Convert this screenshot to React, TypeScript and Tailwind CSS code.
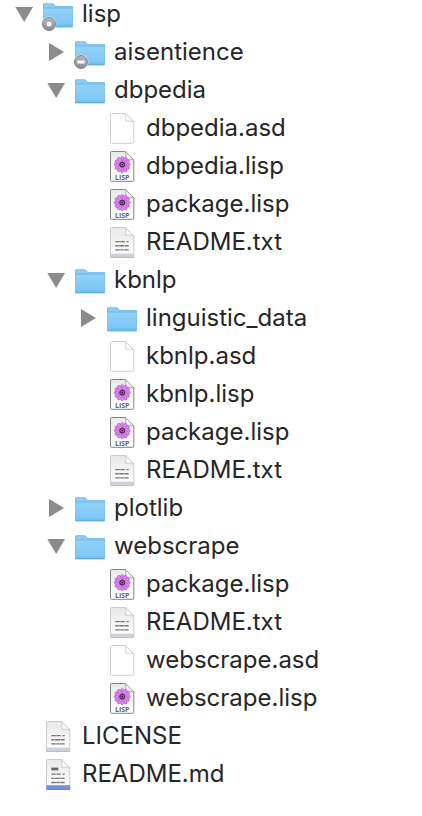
import { useState } from "react";

type Kind = "folder" | "blank" | "lisp" | "txt" | "md";
type Badge = "dot" | "minus";
type Entry = {
  name: string;
  kind: Kind;
  badge?: Badge;
  open?: boolean;
  children?: Entry[];
};

const TREE: Entry[] = [
  {
    name: "lisp",
    kind: "folder",
    badge: "dot",
    open: true,
    children: [
      { name: "aisentience", kind: "folder", badge: "minus" },
      {
        name: "dbpedia",
        kind: "folder",
        open: true,
        children: [
          { name: "dbpedia.asd", kind: "blank" },
          { name: "dbpedia.lisp", kind: "lisp" },
          { name: "package.lisp", kind: "lisp" },
          { name: "README.txt", kind: "txt" },
        ],
      },
      {
        name: "kbnlp",
        kind: "folder",
        open: true,
        children: [
          { name: "linguistic_data", kind: "folder" },
          { name: "kbnlp.asd", kind: "blank" },
          { name: "kbnlp.lisp", kind: "lisp" },
          { name: "package.lisp", kind: "lisp" },
          { name: "README.txt", kind: "txt" },
        ],
      },
      { name: "plotlib", kind: "folder" },
      {
        name: "webscrape",
        kind: "folder",
        open: true,
        children: [
          { name: "package.lisp", kind: "lisp" },
          { name: "README.txt", kind: "txt" },
          { name: "webscrape.asd", kind: "blank" },
          { name: "webscrape.lisp", kind: "lisp" },
        ],
      },
    ],
  },
  { name: "LICENSE", kind: "txt" },
  { name: "README.md", kind: "md" },
];

const PETALS = Array.from({ length: 12 }, (_, i) => i * 30);

function Gradients() {
  return (
    <svg className="absolute h-0 w-0" aria-hidden="true">
      <defs>
        <linearGradient id="folderFront" x1="0" y1="0" x2="0" y2="1">
          <stop offset="0" stopColor="#92d2f8" />
          <stop offset="1" stopColor="#7ac6f5" />
        </linearGradient>
        <linearGradient id="paper" x1="0" y1="0" x2="0" y2="1">
          <stop offset="0" stopColor="#e8e8e8" />
          <stop offset="1" stopColor="#ffffff" />
        </linearGradient>
        <linearGradient id="badge" x1="0" y1="0" x2="0" y2="1">
          <stop offset="0" stopColor="#b8b8b8" />
          <stop offset="1" stopColor="#8c8c8c" />
        </linearGradient>
      </defs>
    </svg>
  );
}

function FolderIcon({ badge }: { badge?: Badge }) {
  return (
    <svg viewBox="0 0 32 32" className="h-8 w-8 shrink-0 overflow-visible" aria-hidden="true">
      <path d="M1.5 29.6h29" stroke="#000" strokeOpacity=".14" />
      <path
        d="M1 6.6Q1 5.3 2.2 5.3H10.2Q11 5.3 11.7 5.9L13.4 7.4Q14 8 15 8H29.8Q31 8 31 9.2V28Q31 29 30 29H2Q1 29 1 28Z"
        fill="#6fbbea"
      />
      <path d="M1.8 9V6.8Q1.8 6 2.6 6H10Q10.8 6 11.3 6.5L13 8Q13.7 8.6 14.6 8.6H30.2V10H1.8Z" fill="#8ccbf3" />
      <path d="M1.4 10.2H30.6V27.6Q30.6 28.5 29.8 28.5H2.2Q1.4 28.5 1.4 27.6Z" fill="url(#folderFront)" />
      <path d="M1.4 9.9H30.6" stroke="#70b7e3" strokeWidth=".8" />
      <path d="M2 27H30" stroke="#68b4e4" strokeWidth=".7" />
      <path d="M1.4 28.6H30.6" stroke="#5da5d3" strokeWidth=".8" />
      {badge && (
        <g>
          <circle cx="7" cy="26" r="7.4" fill="#f4f4f4" />
          <circle cx="7" cy="26" r="6.5" fill="url(#badge)" stroke="#7c7c7c" strokeWidth=".9" />
          {badge === "dot" ? (
            <circle cx="7" cy="26" r="2.5" fill="#fff" />
          ) : (
            <rect x="3.4" y="24.4" width="7.2" height="3.2" rx=".4" fill="#fff" />
          )}
        </g>
      )}
    </svg>
  );
}

function PageIcon({ kind }: { kind: Kind }) {
  const blank = kind === "blank";
  const lisp = kind === "lisp";
  const edge = lisp ? "#858585" : blank ? "#c9c9c9" : "#c6c6c6";
  return (
    <svg viewBox="0 0 32 32" className="h-8 w-8 shrink-0" aria-hidden="true">
      <path
        d="M5.4 1.5H19.5L27.8 10V30.4Q27.8 31.3 26.9 31.3H5.4Q4.5 31.3 4.5 30.4V2.4Q4.5 1.5 5.4 1.5Z"
        fill={blank ? "#fff" : "url(#paper)"}
        stroke={edge}
        strokeWidth={lisp ? 1 : 0.9}
      />
      {kind === "txt" && (
        <g>
          <path d="M4.2 27.6H28.1V31.6H4.2Z" fill="#cdd1dc" />
          <path d="M4.2 31.4H28.1" stroke="#b0b3bb" strokeWidth=".7" />
          <path
            d="M9.3 15.6h4.5M14.3 15.6h4.5M20.5 15.6h2.2M9.3 19.7h3M12.8 19.7h5.4M18.7 19.7h4M9.3 23.9h4.5M14.3 23.9h3.4M18.2 23.9h4.5"
            stroke="#777"
            strokeWidth="1.4"
          />
        </g>
      )}
      {kind === "md" && (
        <g>
          <path d="M4.2 27.2H28.1V31.6H4.2Z" fill="#6e93dc" />
          <path d="M4.2 31.4H28.1" stroke="#5274b8" strokeWidth=".7" />
          <path d="M9.3 11h7" stroke="#666" strokeWidth="2.8" />
          <path
            d="M9.3 16.2h4.5M14.3 16.2h4.5M20.5 16.2h2.2M9.3 20.3h3M12.8 20.3h5.4M18.7 20.3h4M9.3 24.5h4.5M14.3 24.5h3.4M18.2 24.5h4.5"
            stroke="#777"
            strokeWidth="1.3"
          />
        </g>
      )}
      <path
        d="M19.5 1.5Q20.2 4 19.6 9.3Q24 8.8 27.8 10Z"
        fill={blank ? "#fff" : "#f8f8f8"}
        stroke={lisp ? "#9a9a9a" : "#c6c6c6"}
        strokeWidth=".8"
        strokeLinejoin="round"
      />
      {lisp && (
        <g>
          {PETALS.map((a) => (
            <ellipse
              key={a}
              cx="16.2"
              cy="9.8"
              rx="1.8"
              ry="3.4"
              fill="#de84f4"
              stroke="#9d4fb6"
              strokeWidth=".45"
              transform={`rotate(${a} 16.2 14.6)`}
            />
          ))}
          <circle cx="16.2" cy="14.6" r="2.9" fill="#562759" />
          <circle cx="16.2" cy="14.6" r="1.7" fill="#c29440" />
          <circle cx="16.2" cy="14.6" r=".9" fill="#2a1426" />
          <text
            x="16.2"
            y="29.8"
            textAnchor="middle"
            fontFamily="'Open Sans', sans-serif"
            fontSize="7"
            fontWeight="700"
            fill="#666"
            opacity=".99"
          >
            LISP
          </text>
        </g>
      )}
    </svg>
  );
}

function Node({ entry }: { entry: Entry }) {
  const [open, setOpen] = useState(Boolean(entry.open));
  const isFolder = entry.kind === "folder";
  return (
    <li>
      <div className="flex h-[38px] items-center gap-2">
        {isFolder ? (
          <button
            type="button"
            aria-expanded={open}
            aria-label={entry.name}
            onClick={() => setOpen(!open)}
            className="h-5 w-5 shrink-0"
          >
            <svg viewBox="0 0 20 20" className="h-5 w-5" aria-hidden="true">
              <path d={open ? "M1.3 3H19L10.2 18Z" : "M3 1V19L18 10Z"} fill="#8b8b8b" />
            </svg>
          </button>
        ) : (
          <span className="w-5 shrink-0" />
        )}
        {isFolder ? <FolderIcon badge={entry.badge} /> : <PageIcon kind={entry.kind} />}
        <span className="whitespace-nowrap">{entry.name}</span>
      </div>
      {open && entry.children && (
        <ul className="pl-8">
          {entry.children.map((child) => (
            <Node key={child.name} entry={child} />
          ))}
        </ul>
      )}
    </li>
  );
}

export default function App() {
  return (
    <main className="min-h-screen overflow-hidden bg-white font-['Inter','Liberation_Sans',sans-serif] text-2xl text-[#262626]">
      <Gradients />
      <ul className="-mt-[5px] pl-3.5">
        {TREE.map((entry) => (
          <Node key={entry.name} entry={entry} />
        ))}
      </ul>
    </main>
  );
}
